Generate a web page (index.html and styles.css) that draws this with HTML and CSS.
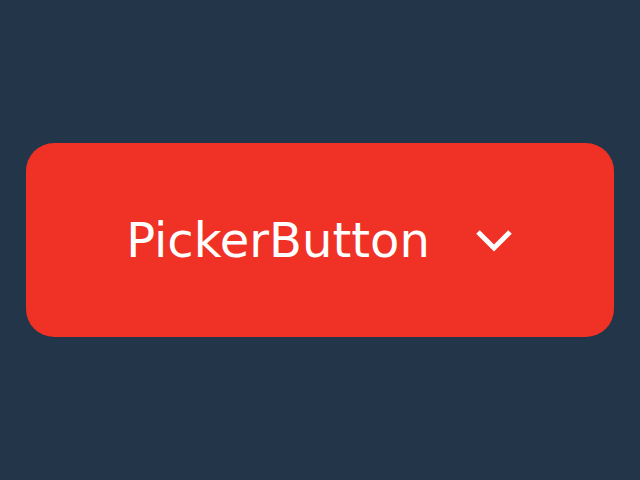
FILE: index.html
```html
<!DOCTYPE html>
<html>
<head>
<meta charset="utf-8">
<link rel="stylesheet" href="styles.css">
</head>
<body>
<div class="stage">
  <button class="picker">
    <span class="label">PickerButton</span>
    <svg class="chev" width="40" height="26" viewBox="0 0 40 26"><path d="M4 5 L20 21 L36 5" fill="none" stroke="#fff" stroke-width="5"/></svg>
  </button>
</div>
</body>
</html>
```
FILE: styles.css
```css
html, body { margin: 0; padding: 0; }
body { background: #233549; width: 640px; height: 480px; }
.stage { height: 480px; display: flex; align-items: center; justify-content: center; }
.picker {
  width: 588px; height: 194px;
  background: #f03125; border: none; border-radius: 28px;
  display: flex; align-items: center; justify-content: center; gap: 44px;
  padding: 0; color: #fff;
  font-family: "DejaVu Sans", sans-serif; font-size: 48px;
}
.label { line-height: 1; }
.chev { display: block; }
```
